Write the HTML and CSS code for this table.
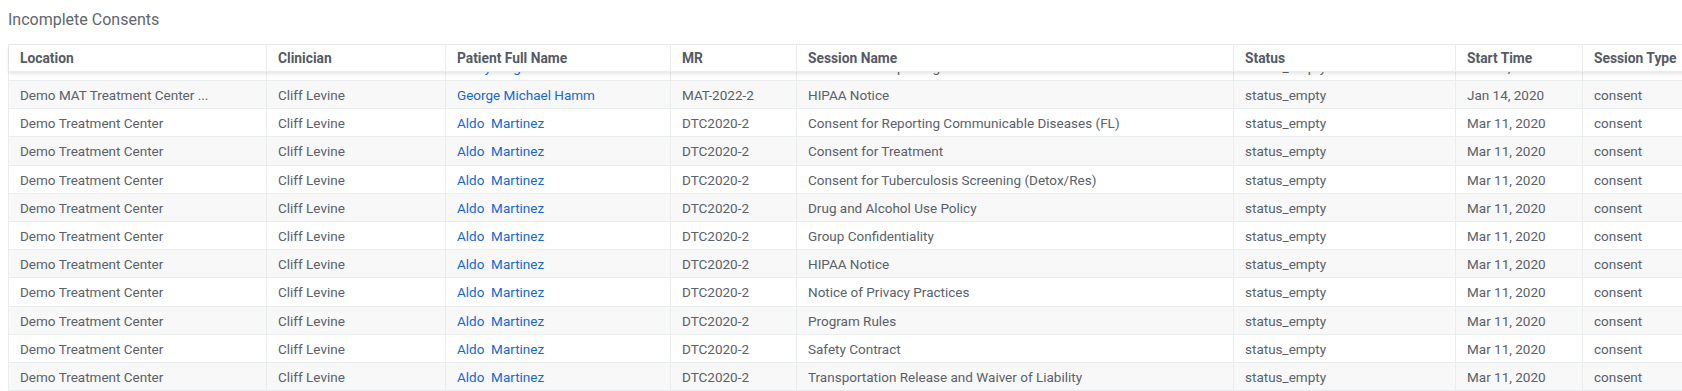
FILE: index.html
```html
<!DOCTYPE html>
<html lang="en">
<head>
<meta charset="UTF-8">
<title>Incomplete Consents</title>
<link rel="stylesheet" href="styles.css">
</head>
<body>
<div class="page">
<h2 class="title">Incomplete Consents</h2>

<div class="table">
<div class="row head">
<div class="cell">Location</div>
<div class="cell">Clinician</div>
<div class="cell">Patient Full Name</div>
<div class="cell">MR</div>
<div class="cell">Session Name</div>
<div class="cell">Status</div>
<div class="cell">Start Time</div>
<div class="cell">Session Type</div>
</div>

<div class="body">
<div class="rows">
<!-- previous row, scrolled mostly out of view -->
<div class="row">
<div class="cell">Demo MAT Treatment Center ...</div>
<div class="cell">Cliff Levine</div>
<div class="cell"><a href="#">Kathy Singer</a></div>
<div class="cell">MAT-2022-1</div>
<div class="cell">Consent for Reporting Communicable Diseases</div>
<div class="cell">status_empty</div>
<div class="cell">Jan 14, 2020</div>
<div class="cell">consent</div>
</div>
<div class="row odd">
<div class="cell">Demo MAT Treatment Center ...</div>
<div class="cell">Cliff Levine</div>
<div class="cell"><a href="#">George Michael Hamm</a></div>
<div class="cell">MAT-2022-2</div>
<div class="cell">HIPAA Notice</div>
<div class="cell">status_empty</div>
<div class="cell">Jan 14, 2020</div>
<div class="cell">consent</div>
</div>
<div class="row">
<div class="cell">Demo Treatment Center</div>
<div class="cell">Cliff Levine</div>
<div class="cell"><a href="#">Aldo&nbsp; Martinez</a></div>
<div class="cell">DTC2020-2</div>
<div class="cell">Consent for Reporting Communicable Diseases (FL)</div>
<div class="cell">status_empty</div>
<div class="cell">Mar 11, 2020</div>
<div class="cell">consent</div>
</div>
<div class="row odd">
<div class="cell">Demo Treatment Center</div>
<div class="cell">Cliff Levine</div>
<div class="cell"><a href="#">Aldo&nbsp; Martinez</a></div>
<div class="cell">DTC2020-2</div>
<div class="cell">Consent for Treatment</div>
<div class="cell">status_empty</div>
<div class="cell">Mar 11, 2020</div>
<div class="cell">consent</div>
</div>
<div class="row">
<div class="cell">Demo Treatment Center</div>
<div class="cell">Cliff Levine</div>
<div class="cell"><a href="#">Aldo&nbsp; Martinez</a></div>
<div class="cell">DTC2020-2</div>
<div class="cell">Consent for Tuberculosis Screening (Detox/Res)</div>
<div class="cell">status_empty</div>
<div class="cell">Mar 11, 2020</div>
<div class="cell">consent</div>
</div>
<div class="row odd">
<div class="cell">Demo Treatment Center</div>
<div class="cell">Cliff Levine</div>
<div class="cell"><a href="#">Aldo&nbsp; Martinez</a></div>
<div class="cell">DTC2020-2</div>
<div class="cell">Drug and Alcohol Use Policy</div>
<div class="cell">status_empty</div>
<div class="cell">Mar 11, 2020</div>
<div class="cell">consent</div>
</div>
<div class="row">
<div class="cell">Demo Treatment Center</div>
<div class="cell">Cliff Levine</div>
<div class="cell"><a href="#">Aldo&nbsp; Martinez</a></div>
<div class="cell">DTC2020-2</div>
<div class="cell">Group Confidentiality</div>
<div class="cell">status_empty</div>
<div class="cell">Mar 11, 2020</div>
<div class="cell">consent</div>
</div>
<div class="row odd">
<div class="cell">Demo Treatment Center</div>
<div class="cell">Cliff Levine</div>
<div class="cell"><a href="#">Aldo&nbsp; Martinez</a></div>
<div class="cell">DTC2020-2</div>
<div class="cell">HIPAA Notice</div>
<div class="cell">status_empty</div>
<div class="cell">Mar 11, 2020</div>
<div class="cell">consent</div>
</div>
<div class="row">
<div class="cell">Demo Treatment Center</div>
<div class="cell">Cliff Levine</div>
<div class="cell"><a href="#">Aldo&nbsp; Martinez</a></div>
<div class="cell">DTC2020-2</div>
<div class="cell">Notice of Privacy Practices</div>
<div class="cell">status_empty</div>
<div class="cell">Mar 11, 2020</div>
<div class="cell">consent</div>
</div>
<div class="row odd">
<div class="cell">Demo Treatment Center</div>
<div class="cell">Cliff Levine</div>
<div class="cell"><a href="#">Aldo&nbsp; Martinez</a></div>
<div class="cell">DTC2020-2</div>
<div class="cell">Program Rules</div>
<div class="cell">status_empty</div>
<div class="cell">Mar 11, 2020</div>
<div class="cell">consent</div>
</div>
<div class="row">
<div class="cell">Demo Treatment Center</div>
<div class="cell">Cliff Levine</div>
<div class="cell"><a href="#">Aldo&nbsp; Martinez</a></div>
<div class="cell">DTC2020-2</div>
<div class="cell">Safety Contract</div>
<div class="cell">status_empty</div>
<div class="cell">Mar 11, 2020</div>
<div class="cell">consent</div>
</div>
<div class="row odd">
<div class="cell">Demo Treatment Center</div>
<div class="cell">Cliff Levine</div>
<div class="cell"><a href="#">Aldo&nbsp; Martinez</a></div>
<div class="cell">DTC2020-2</div>
<div class="cell">Transportation Release and Waiver of Liability</div>
<div class="cell">status_empty</div>
<div class="cell">Mar 11, 2020</div>
<div class="cell">consent</div>
</div>
</div>
</div>
</div>
</div>
</body>
</html>
```

FILE: styles.css
```css
html, body {
margin: 0;
padding: 0;
overflow: hidden;
background: #fff;
}
body {
font-family: Roboto, 'Liberation Sans', sans-serif;
font-size: 13.5px;
color: #5a6169;
}
.page {
padding-left: 8px;
}
.title {
margin: 0 0 14px;
padding-top: 10px;
font-size: 16px;
font-weight: 400;
line-height: 20px;
color: #5f666e;
}
.table {
width: max-content;
border-top: 1px solid #eaeded;
border-left: 1px solid #eaeded;
}
.row {
display: grid;
grid-template-columns: 258px 179px 225px 126px 437px 222px 127px 160px;
height: 28.2px;
box-sizing: border-box;
border-bottom: 1px solid #eaeded;
background: #fff;
}
.row.odd {
background: #f8f8f8;
}
.cell {
display: flex;
align-items: center;
padding: 1px 11px 0;
box-sizing: border-box;
border-right: 1px solid #eaeded;
white-space: nowrap;
overflow: hidden;
}
.head {
position: relative;
z-index: 1;
height: 27px;
font-size: 13.8px;
font-weight: 700;
color: #545b64;
box-shadow: 0 2px 4px rgba(0, 0, 0, 0.1);
}
.head .cell {
padding-top: 0;
}
.body {
height: 330px;
overflow: hidden;
}
.rows {
margin-top: -19.2px;
}
.cell a {
color: #1668d2;
text-decoration: none;
}
```
